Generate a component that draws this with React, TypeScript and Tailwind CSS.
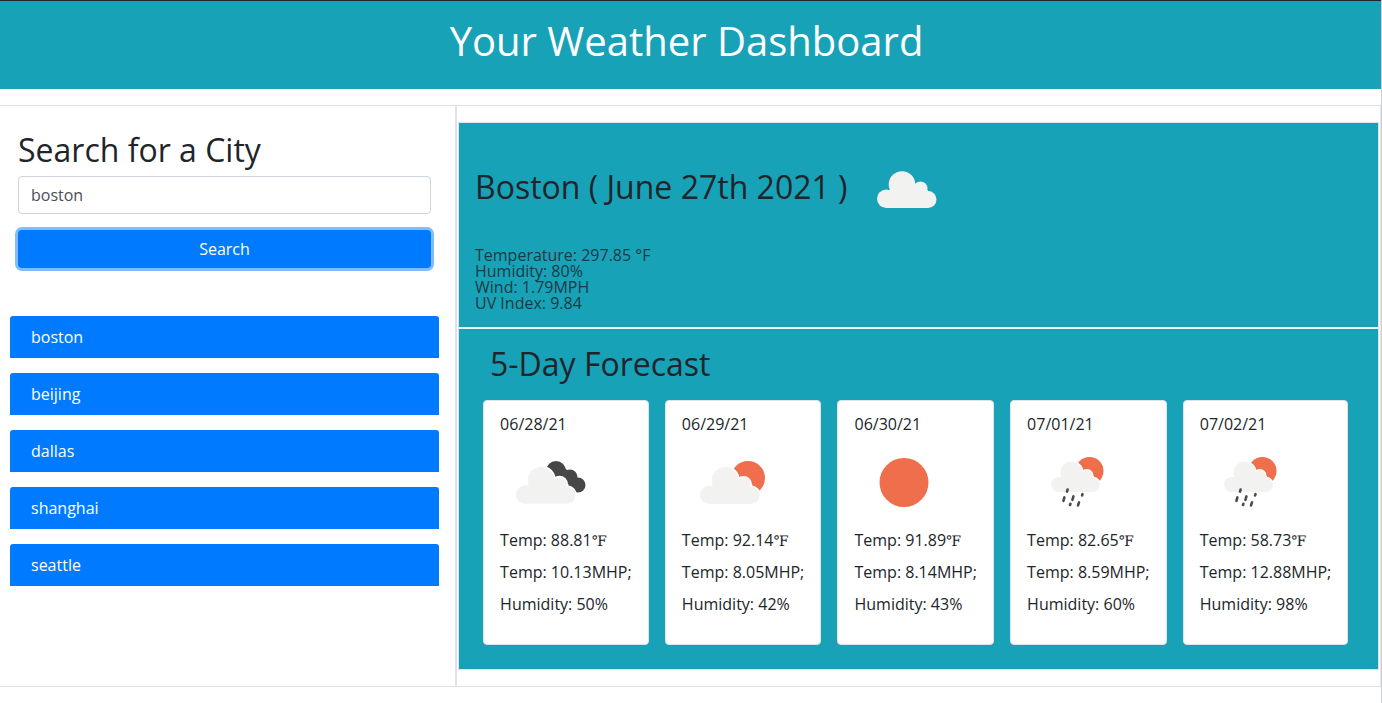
const cities = ["boston", "beijing", "dallas", "shanghai", "seattle"];

const forecast = [
  { date: "06/28/21", icon: "clouds", temp: "88.81", wind: "10.13", humidity: "50" },
  { date: "06/29/21", icon: "partly", temp: "92.14", wind: "8.05", humidity: "42" },
  { date: "06/30/21", icon: "sun", temp: "91.89", wind: "8.14", humidity: "43" },
  { date: "07/01/21", icon: "rain", temp: "82.65", wind: "8.59", humidity: "60" },
  { date: "07/02/21", icon: "rain", temp: "58.73", wind: "12.88", humidity: "98" },
];

function CloudShape({ outline }: { outline?: boolean }) {
  const stroke = outline ? "#ffffff" : "none";
  const strokeWidth = outline ? 3 : 0;
  const fill = outline ? "#ffffff" : "#f2f2f0";
  return (
    <g fill={fill} stroke={stroke} strokeWidth={strokeWidth}>
      <circle cx="25" cy="13.5" r="13.3" />
      <circle cx="43.5" cy="17.5" r="7" />
      <circle cx="9.2" cy="27.8" r="9.2" />
      <circle cx="51" cy="28.5" r="8.5" />
      <rect x="9" y="19" width="42" height="18" />
    </g>
  );
}

function Cloud({ x, y, scale = 1 }: { x: number; y: number; scale?: number }) {
  return (
    <g transform={`translate(${x} ${y}) scale(${scale})`}>
      <CloudShape outline />
      <CloudShape />
    </g>
  );
}

function WeatherIcon({ kind }: { kind: string }) {
  return (
    <svg className="block w-[100px] h-[92px]" viewBox="0 0 100 92">
      {kind === "clouds" && (
        <>
          <g fill="#474747">
            <circle cx="56" cy="35" r="10" />
            <circle cx="70" cy="41" r="7.5" />
            <circle cx="78" cy="49" r="7.5" />
            <path d="M50 36 L62 30 L80 44 L72 56 Z" />
          </g>
          <Cloud x={16} y={30.7} />
        </>
      )}
      {kind === "partly" && (
        <>
          <circle cx="66" cy="42" r="17" fill="#ef6f4d" />
          <Cloud x={18} y={31} />
        </>
      )}
      {kind === "sun" && <circle cx="50" cy="46.5" r="24.5" fill="#ef6f4d" />}
      {kind === "rain" && (
        <>
          <circle cx="62.5" cy="35" r="14" fill="#ef6f4d" />
          <Cloud x={24} y={25.7} scale={0.82} />
          <g stroke="#4a4a4a" strokeWidth="2.6" strokeLinecap="round">
            <path d="M40.6 53.6 L40 55.6" />
            <path d="M37.4 61.4 L36.4 64.8" />
            <path d="M46.4 60.4 L45.4 63.8" />
            <path d="M55.5 58.2 L55.1 59.4" />
            <path d="M43.4 67.8 L43 69" />
            <path d="M52 66.4 L51 69.4" />
          </g>
        </>
      )}
    </svg>
  );
}

export default function App() {
  return (
    <div
      className="h-[703px] overflow-hidden border-r border-[#ccd0d5] bg-white text-[#212529]"
      style={{ fontFamily: '"Open Sans", sans-serif' }}
    >
      <header className="border-t border-[#212529] bg-[#18a2b8] h-[89px] flex items-center justify-center pr-2 pb-2">
        <h1 className="text-[40px] leading-[48px] text-white">Your Weather Dashboard</h1>
      </header>

      <div className="mt-4 border-t border-b border-[#dee2e6] h-[582px] flex">
        {/* search column */}
        <aside className="w-[457px] shrink-0 border-r-2 border-[#dee2e6] pl-[10px] pr-4 pt-[25px]">
          <div className="px-2">
            <h2 className="text-[32px] leading-[38px] mb-[7px]">Search for a City</h2>
            <input
              readOnly
              value="boston"
              className="block w-full h-[38px] px-3 border border-[#ced4da] rounded text-base text-[#495057] bg-white"
            />
            <button className="block w-full h-[38px] mt-4 rounded bg-[#007bff] text-white text-base ring-[3px] ring-[#80bdff]">
              Search
            </button>
          </div>

          <ul className="mt-12 flex flex-col gap-[15px]">
            {cities.map((city) => (
              <li key={city} className="h-[42px] flex items-center px-[21px] rounded-t-[3px] bg-[#007bff] text-white">
                {city}
              </li>
            ))}
          </ul>
        </aside>

        {/* results */}
        <main className="flex-1 pl-px pr-px pt-4 border-r border-[#e4e6e9]">
          <div className="h-[548px] border border-[#dee2e6] bg-[#18a2b8]">
            <section className="h-[206px] px-4 flex flex-col justify-end pb-4 border-b-2 border-[#f0f4f5]">
              <div className="flex items-center mb-[10px] h-[100px]">
                <h2 className="text-[32px] leading-[38px]">Boston ( June 27th 2021 )</h2>
                <svg className="ml-[29px] mt-[6px] w-[60px] h-[38px]" viewBox="0 0 60 38">
                  <CloudShape />
                </svg>
              </div>
              <div className="leading-4 text-[#1c3a42]">
                <p>Temperature: 297.85 °F</p>
                <p>Humidity: 80%</p>
                <p>Wind: 1.79MPH</p>
                <p>UV Index: 9.84</p>
              </div>
            </section>

            <section className="pt-4 px-6">
              <h2 className="text-[32px] leading-[38px] pl-[7px] mb-[17px]">5-Day Forecast</h2>
              <div className="flex gap-4">
                {forecast.map((day) => (
                  <div key={day.date} className="h-[245px] bg-white border border-[#dfe3e6] rounded px-[16.1px] pt-[11px]">
                    <p>{day.date}</p>
                    <WeatherIcon kind={day.icon} />
                    <p className="mb-2">
                      Temp: {day.temp}
                      <span className="font-['DejaVu_Serif'] text-[14.5px] leading-none">℉</span>
                    </p>
                    <p className="mb-2">Temp: {day.wind}MHP;</p>
                    <p>Humidity: {day.humidity}%</p>
                  </div>
                ))}
              </div>
            </section>
          </div>
        </main>
      </div>
    </div>
  );
}
